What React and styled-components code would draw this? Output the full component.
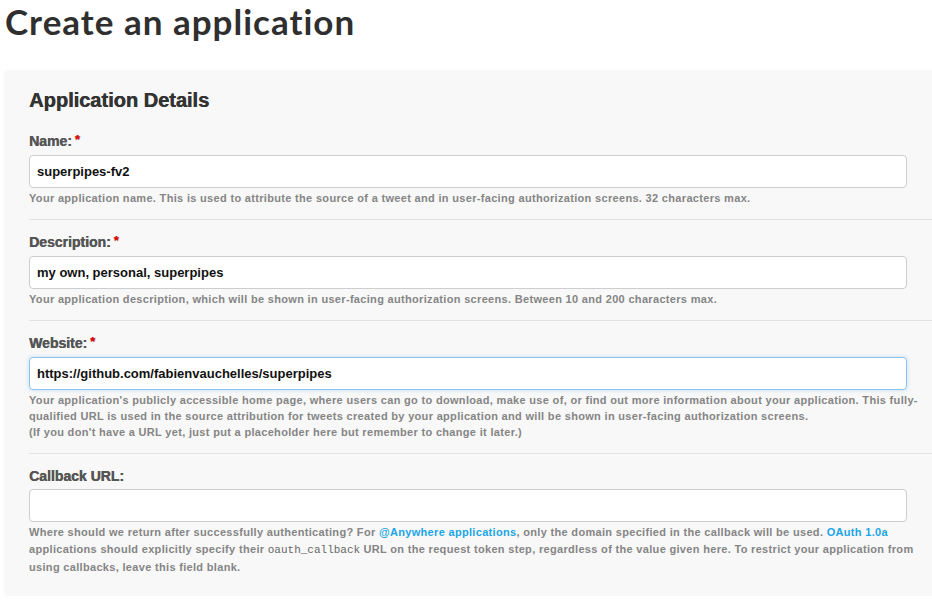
import React from "react";
import styled, { createGlobalStyle } from "styled-components";

const Global = createGlobalStyle`
  html, body {
    margin: 0;
    padding: 0;
    background: #fff;
  }
  body {
    font-family: "Liberation Sans", Arial, sans-serif;
    color: #333;
  }
`;

const Page = styled.div`
  width: 932px;
  padding: 0 0 0 4px;
  box-sizing: border-box;
  overflow: hidden;
`;

const Title = styled.h1`
  margin: 0;
  padding: 0 0 0 1px;
  height: 70px;
  font-family: Lato, sans-serif;
  font-weight: 700;
  font-size: 35px;
  line-height: 42px;
  letter-spacing: 1px;
  color: #2f2f2f;
`;

const Panel = styled.div`
  background: #f8f8f8;
  border-radius: 4px 0 0 4px;
  padding: 18px 0 20px 25px;
`;

const PanelHeading = styled.h2`
  margin: 0 0 20px;
  font-size: 20px;
  line-height: 24px;
  font-weight: 700;
  color: #333;
  text-shadow: 0.5px 0 0 #333;
`;

const Field = styled.div`
  padding-top: ${(p) => (p.$first ? "0" : "13px")};
  padding-bottom: ${(p) => (p.$last ? "0" : "13px")};
  border-bottom: ${(p) => (p.$last ? "none" : "1px solid #e2e2e2")};
`;

const Label = styled.label`
  display: block;
  margin-bottom: 4px;
  font-size: 14px;
  line-height: 18px;
  font-weight: 700;
  color: #555;
  text-shadow: 0.4px 0 0 #555;
`;

const Required = styled.span`
  color: #e00;
  margin-left: 3px;
  font-size: 13px;
  position: relative;
  top: -2px;
`;

const Input = styled.input`
  display: block;
  box-sizing: border-box;
  width: 878px;
  height: 33px;
  margin: 0;
  padding: 0 7px;
  border: 1px solid ${(p) => (p.$focused ? "#8fc3ec" : "#cdcdcd")};
  border-radius: 4px;
  background: #fff;
  box-shadow: ${(p) =>
    p.$focused ? "0 0 4px rgba(82, 168, 236, 0.35)" : "none"};
  font-family: "Liberation Sans", Arial, sans-serif;
  font-size: 13px;
  font-weight: 700;
  color: #111;
  outline: none;
`;

const Help = styled.p`
  margin: 2px 0 0;
  font-size: 11px;
  line-height: ${(p) => p.$lh || 16}px;
  font-weight: 700;
  letter-spacing: 0.32px;
  color: #858585;
  white-space: nowrap;
`;

const Link = styled.a`
  color: #1aa5e6;
  text-decoration: none;
`;

const Code = styled.code`
  font-family: "Liberation Mono", "Courier New", monospace;
  font-size: 11px;
  font-weight: 400;
  letter-spacing: 0;
  color: #666;
`;

export default function App() {
  return (
    <Page>
      <Global />
      <Title>Create an application</Title>
      <Panel>
        <PanelHeading>Application Details</PanelHeading>

        <Field $first>
          <Label>
            Name:<Required>*</Required>
          </Label>
          <Input defaultValue="superpipes-fv2" />
          <Help>
            Your application name. This is used to attribute the source of a
            tweet and in user-facing authorization screens. 32 characters max.
          </Help>
        </Field>

        <Field>
          <Label>
            Description:<Required>*</Required>
          </Label>
          <Input defaultValue="my own, personal, superpipes" />
          <Help>
            Your application description, which will be shown in user-facing
            authorization screens. Between 10 and 200 characters max.
          </Help>
        </Field>

        <Field>
          <Label>
            Website:<Required>*</Required>
          </Label>
          <Input
            $focused
            defaultValue="https://github.com/fabienvauchelles/superpipes"
          />
          <Help>
            Your application's publicly accessible home page, where users can
            go to download, make use of, or find out more information about
            your application. This fully-
            <br />
            qualified URL is used in the source attribution for tweets created
            by your application and will be shown in user-facing authorization
            screens.
            <br />
            (If you don't have a URL yet, just put a placeholder here but
            remember to change it later.)
          </Help>
        </Field>

        <Field $last>
          <Label>Callback URL:</Label>
          <Input defaultValue="" />
          <Help $lh={17}>
            Where should we return after successfully authenticating? For{" "}
            <Link href="#">@Anywhere applications</Link>, only the domain
            specified in the callback will be used.{" "}
            <Link href="#">OAuth 1.0a</Link>
            <br />
            applications should explicitly specify their{" "}
            <Code>oauth_callback</Code> URL on the request token step,
            regardless of the value given here. To restrict your application
            from
            <br />
            using callbacks, leave this field blank.
          </Help>
        </Field>
      </Panel>
    </Page>
  );
}
